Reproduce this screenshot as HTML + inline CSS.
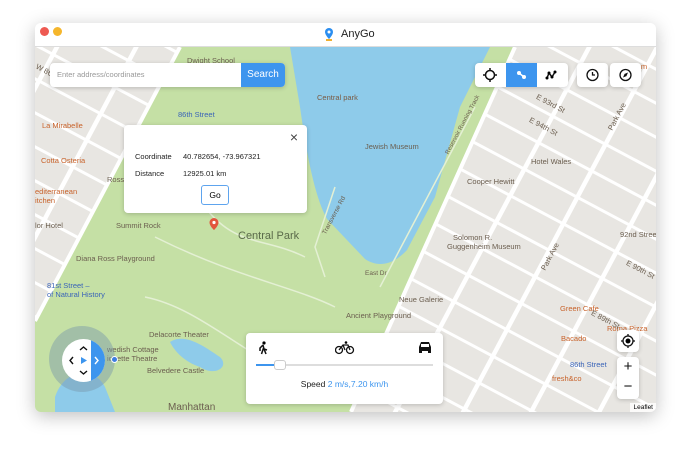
<!DOCTYPE html>
<html><head><meta charset="utf-8"><style>
*{margin:0;padding:0;box-sizing:border-box}
html,body{width:690px;height:456px;overflow:hidden}
body{background:#fff;font-family:"Liberation Sans",sans-serif;position:relative}
.win{position:absolute;left:35px;top:23px;width:621px;height:389px;border-radius:6px;overflow:hidden;box-shadow:0 4px 18px rgba(0,0,0,.25);background:#fff}
.tb{position:absolute;left:0;top:0;width:100%;height:24px;background:#fff;border-bottom:1px solid #ddd}
.dot{position:absolute;top:4px;width:9px;height:9px;border-radius:50%}
.map{position:absolute;left:0;top:24px;width:621px;height:365px;background:#e8e6e2;overflow:hidden}
.l{position:absolute;font-size:7.5px;color:#6b5e4f;white-space:nowrap}
.o{color:#c8622a}
.b{color:#3a64b8}
.card{position:absolute;background:#fff;border-radius:4px;box-shadow:0 1px 5px rgba(0,0,0,.2)}
</style></head><body>
<div class="win">
<div class="tb"><div class="dot" style="left:5px;background:#ee5a52"></div><div class="dot" style="left:18px;background:#f5b62c"></div>
<div style="position:absolute;left:289px;top:4px;width:10px;height:14px"><svg width="10" height="14"><path d="M5 1a4 4 0 0 1 4 4c0 3-4 7-4 7s-4-4-4-7a4 4 0 0 1 4-4z" fill="#2b8ef0"/><circle cx="5" cy="5" r="1.5" fill="#fff"/><rect x="2" y="12" width="6" height="2" fill="#f0b030"/></svg></div>
<div style="position:absolute;left:306px;top:5px;font-size:11px;color:#222">AnyGo</div></div>
<div class="map">
<svg width="621" height="365" style="position:absolute;left:0;top:0">
<g stroke="#fff" stroke-width="3">
<g transform="rotate(28 300 180)">
<line x1="-300" y1="-200" x2="900" y2="-200"/><line x1="-300" y1="-170" x2="900" y2="-170"/><line x1="-300" y1="-140" x2="900" y2="-140"/><line x1="-300" y1="-110" x2="900" y2="-110"/><line x1="-300" y1="-80" x2="900" y2="-80"/><line x1="-300" y1="-50" x2="900" y2="-50"/><line x1="-300" y1="-20" x2="900" y2="-20"/><line x1="-300" y1="10" x2="900" y2="10"/><line x1="-300" y1="40" x2="900" y2="40"/><line x1="-300" y1="70" x2="900" y2="70"/><line x1="-300" y1="100" x2="900" y2="100"/><line x1="-300" y1="130" x2="900" y2="130"/><line x1="-300" y1="160" x2="900" y2="160"/><line x1="-300" y1="190" x2="900" y2="190"/><line x1="-300" y1="220" x2="900" y2="220"/><line x1="-300" y1="250" x2="900" y2="250"/><line x1="-300" y1="280" x2="900" y2="280"/><line x1="-300" y1="310" x2="900" y2="310"/><line x1="-300" y1="340" x2="900" y2="340"/><line x1="-300" y1="370" x2="900" y2="370"/><line x1="-300" y1="400" x2="900" y2="400"/><line x1="-300" y1="430" x2="900" y2="430"/><line x1="-300" y1="460" x2="900" y2="460"/><line x1="-300" y1="490" x2="900" y2="490"/><line x1="-300" y1="520" x2="900" y2="520"/>
</g>
<g transform="rotate(28 300 180)" stroke-width="4.5">
<line x1="-100" y1="-400" x2="-100" y2="800"/><line x1="-30" y1="-400" x2="-30" y2="800"/><line x1="40" y1="-400" x2="40" y2="800"/><line x1="110" y1="-400" x2="110" y2="800"/><line x1="440" y1="-400" x2="440" y2="800"/><line x1="500" y1="-400" x2="500" y2="800"/><line x1="560" y1="-400" x2="560" y2="800"/><line x1="620" y1="-400" x2="620" y2="800"/><line x1="680" y1="-400" x2="680" y2="800"/><line x1="740" y1="-400" x2="740" y2="800"/>
</g></g>
<path d="M145 0 L480 0 L316 365 L0 365 L0 274 Z" fill="#c5e0a5"/>
<path d="M145 0 L0 274" stroke="#fff" stroke-width="4"/>
<path d="M480 0 L316 365" stroke="#fff" stroke-width="4"/>
<path d="M255 0 L455 0 L425 60 L400 150 L372 203 C360 216 345 222 330 212 L292 172 C280 150 272 110 265 60 Z" fill="#8ecbea"/>
<path d="M135 295 C150 285 170 300 185 310 C195 320 180 330 165 320 C150 315 140 305 135 295Z" fill="#8ecbea"/>
<path d="M20 350 C30 320 60 320 70 340 L80 365 L20 365Z" fill="#8ecbea"/>
<g fill="none" stroke="#e4f0d4" stroke-width="1.5"><path d="M120 190 C200 230 260 240 300 260"/><path d="M110 250 C160 260 200 300 260 330"/><path d="M170 160 C200 200 230 190 270 210"/><path d="M440 60 L345 240"/><path d="M300 140 L280 200 L290 230"/></g>
</svg>
<div class="l" style="left:152px;top:9px">Dwight School</div>
<div class="l" style="left:282px;top:46px;color:#7a5a42">Central park</div>
<div class="l b" style="left:143px;top:63px">86th Street</div>
<div class="l o" style="left:7px;top:74px">La Mirabelle</div>
<div class="l o" style="left:6px;top:109px">Cotta Osteria</div>
<div class="l" style="left:72px;top:128px">Rossl</div>
<div class="l o" style="left:0;top:140px">editerranean</div>
<div class="l o" style="left:0;top:149px">itchen</div>
<div class="l" style="left:0;top:174px">lor Hotel</div>
<div class="l" style="left:81px;top:174px">Summit Rock</div>
<div class="l" style="left:203px;top:183px;font-size:11px;color:#5a6a4a">Central Park</div>
<div class="l" style="left:41px;top:207px">Diana Ross Playground</div>
<div class="l b" style="left:12px;top:234px">81st Street –</div>
<div class="l b" style="left:12px;top:243px">of Natural History</div>
<div class="l" style="left:330px;top:95px">Jewish Museum</div>
<div class="l" style="left:496px;top:110px">Hotel Wales</div>
<div class="l" style="left:432px;top:130px">Cooper Hewitt</div>
<div class="l" style="left:418px;top:186px">Solomon R.</div>
<div class="l" style="left:412px;top:195px">Guggenheim Museum</div>
<div class="l" style="left:585px;top:183px">92nd Street Y</div>
<div class="l" style="left:364px;top:248px">Neue Galerie</div>
<div class="l" style="left:311px;top:264px">Ancient Playground</div>
<div class="l" style="left:114px;top:283px">Delacorte Theater</div>
<div class="l" style="left:72px;top:298px">wedish Cottage</div>
<div class="l" style="left:72px;top:307px">ionette Theatre</div>
<div class="l" style="left:112px;top:319px">Belvedere Castle</div>
<div class="l" style="left:133px;top:355px;font-size:10px">Manhattan</div>
<div class="l o" style="left:525px;top:257px">Green Cafe</div>
<div class="l o" style="left:526px;top:287px">Bacado</div>
<div class="l o" style="left:572px;top:277px">Roma Pizza</div>
<div class="l b" style="left:535px;top:313px">86th Street</div>
<div class="l o" style="left:517px;top:327px">fresh&amp;co</div>
<div class="l" style="left:493px;top:75px;transform:rotate(28deg)">E 94th St</div>
<div class="l" style="left:500px;top:52px;transform:rotate(28deg)">E 93rd St</div>
<div class="l" style="left:555px;top:268px;transform:rotate(28deg)">E 89th St</div>
<div class="l" style="left:590px;top:218px;transform:rotate(28deg)">E 90th St</div>
<div class="l" style="left:0;top:20px;transform:rotate(28deg)">W 86th</div>
<div class="l" style="left:567px;top:65px;transform:rotate(-62deg)">Park Ave</div>
<div class="l" style="left:500px;top:205px;transform:rotate(-62deg)">Park Ave</div>
<div class="l" style="left:395px;top:75px;transform:rotate(-62deg);font-size:6px">Reservoir Running Track</div>
<div class="l" style="left:278px;top:165px;transform:rotate(-62deg);font-size:6.5px">Transverse Rd</div>
<div class="l" style="left:330px;top:223px;font-size:6.5px">East Dr</div>
<div class="l" style="left:598px;top:15px;color:#c8622a">Jam</div>
<div class="card" style="left:15px;top:16px;width:235px;height:24px;border-radius:4px;overflow:hidden">
<div style="position:absolute;left:7px;top:7px;font-size:7.5px;color:#999">Enter address/coordinates</div>
<div style="position:absolute;right:0;top:0;width:44px;height:24px;background:#3d95ee;color:#fff;font-size:10px;text-align:center;line-height:24px">Search</div></div>
<div class="card" style="left:440px;top:16px;width:93px;height:24px;overflow:hidden">
<div style="position:absolute;left:31px;top:0;width:31px;height:24px;background:#3d95ee"></div>
<svg width="93" height="24" style="position:absolute;left:0;top:0"><circle cx="15" cy="12" r="4.5" fill="none" stroke="#111" stroke-width="1.5"/><path d="M15 5v3M15 16v3M8 12h3M19 12h3" stroke="#111" stroke-width="1.5"/><circle cx="44" cy="10" r="2" fill="#fff"/><circle cx="49" cy="14" r="2" fill="#fff"/><path d="M44 10L49 14" stroke="#fff" stroke-width="1.5"/><path d="M72 15L74 10L77 14L80 9" fill="none" stroke="#111" stroke-width="1.5"/><circle cx="72" cy="15" r="1.5"/><circle cx="74" cy="10" r="1.5"/><circle cx="77" cy="14" r="1.5"/><circle cx="80" cy="9" r="1.5"/></svg></div>
<div class="card" style="left:542px;top:16px;width:31px;height:24px"><svg width="31" height="24"><circle cx="15.5" cy="12" r="5.5" fill="none" stroke="#111" stroke-width="1.3"/><path d="M15.5 9v3h2.5" fill="none" stroke="#111" stroke-width="1.3"/></svg></div>
<div class="card" style="left:575px;top:16px;width:31px;height:24px"><svg width="31" height="24"><circle cx="15.5" cy="12" r="5.5" fill="none" stroke="#111" stroke-width="1.3"/><path d="M18 9.5l-1.6 3.6-3.4 1.4 1.6-3.6z" fill="#111"/></svg></div>
<div class="card" style="left:89px;top:78px;width:183px;height:88px">
<div style="position:absolute;right:9px;top:4px;font-size:14px;color:#444">×</div>
<div style="position:absolute;left:11px;top:27px;font-size:7.5px;color:#222">Coordinate</div>
<div style="position:absolute;left:59px;top:27px;font-size:7.5px;color:#222">40.782654, -73.967321</div>
<div style="position:absolute;left:11px;top:44px;font-size:7.5px;color:#222">Distance</div>
<div style="position:absolute;left:59px;top:44px;font-size:7.5px;color:#222">12925.01 km</div>
<div style="position:absolute;left:77px;top:60px;width:28px;height:20px;border:1px solid #5ea4ee;border-radius:3px;font-size:8.5px;text-align:center;line-height:18px">Go</div>
</div>
<svg width="12" height="14" style="position:absolute;left:173px;top:170px"><path d="M6 1a4.5 4.5 0 0 1 4.5 4.5C10.5 9 6 13 6 13S1.5 9 1.5 5.5A4.5 4.5 0 0 1 6 1z" fill="#e2553d"/><circle cx="6" cy="5.5" r="1.6" fill="#fff"/></svg>
<div style="position:absolute;left:14px;top:279px;width:66px;height:66px;border-radius:50%;background:rgba(120,150,170,.45)"></div>
<div style="position:absolute;left:27px;top:292px;width:43px;height:43px;border-radius:50%;background:#fff;overflow:hidden">
<div style="position:absolute;left:29px;top:0;width:14px;height:43px;background:#3d95ee"></div>
<svg width="43" height="43" style="position:absolute;left:0;top:0"><path d="M18 11l3.5-3 3.5 3M18 32l3.5 3 3.5-3M11 18l-3 3.5 3 3.5" fill="none" stroke="#111" stroke-width="1.4"/><path d="M33 18l3 3.5-3 3.5" fill="none" stroke="#fff" stroke-width="1.4"/><path d="M19 18l6 3.5-6 3.5z" fill="#3d95ee"/></svg></div>
<div style="position:absolute;left:76px;top:309px;width:7px;height:7px;border-radius:50%;background:#3d7de0;border:1.5px solid #fff"></div>
<div class="card" style="left:211px;top:286px;width:197px;height:71px">
<svg width="12" height="14" style="position:absolute;left:11px;top:8px"><circle cx="7" cy="2" r="1.6"/><path d="M6 4l-3 3v3M6 4l1 4 3 1M6.5 7l-2 6M7 8l2 5" fill="none" stroke="#111" stroke-width="1.5"/></svg>
<svg width="20" height="14" style="position:absolute;left:89px;top:8px"><circle cx="4" cy="9" r="3.5" fill="none" stroke="#111" stroke-width="1.3"/><circle cx="15" cy="9" r="3.5" fill="none" stroke="#111" stroke-width="1.3"/><path d="M4 9l4-5h5l2 5M8 4l2 5" fill="none" stroke="#111" stroke-width="1.3"/><circle cx="11" cy="1.5" r="1.3"/></svg>
<svg width="16" height="14" style="position:absolute;left:171px;top:8px"><path d="M2 6l2-5h8l2 5v6h-3v-2H5v2H2z" fill="#111"/><rect x="4" y="3" width="8" height="3" fill="#fff"/></svg>
<div style="position:absolute;left:10px;top:31px;width:177px;height:2px;background:#ddd"></div>
<div style="position:absolute;left:10px;top:31px;width:22px;height:2px;background:#3d95ee"></div>
<div style="position:absolute;left:28px;top:27px;width:12px;height:10px;border:1px solid #ccc;border-radius:3px;background:#fff"></div>
<div style="position:absolute;left:0;top:46px;width:100%;text-align:center;font-size:8.5px;color:#222">Speed <span style="color:#3d95ee">2 m/s,7.20 km/h</span></div></div>
<div class="card" style="left:582px;top:283px;width:22px;height:22px"><svg width="22" height="22"><circle cx="11" cy="11" r="5" fill="none" stroke="#111" stroke-width="1.3"/><circle cx="11" cy="11" r="2.5"/><path d="M11 4v2M11 16v2M4 11h2M16 11h2" stroke="#111" stroke-width="1.3"/></svg></div>
<div class="card" style="left:582px;top:310px;width:22px;height:42px;font-size:15px;text-align:center;line-height:20px;color:#111">+<br>−</div>
<div style="position:absolute;right:0;bottom:0;background:rgba(255,255,255,.8);font-size:6.5px;padding:1px 3px">Leaflet</div>
</div></div>
</body></html>
